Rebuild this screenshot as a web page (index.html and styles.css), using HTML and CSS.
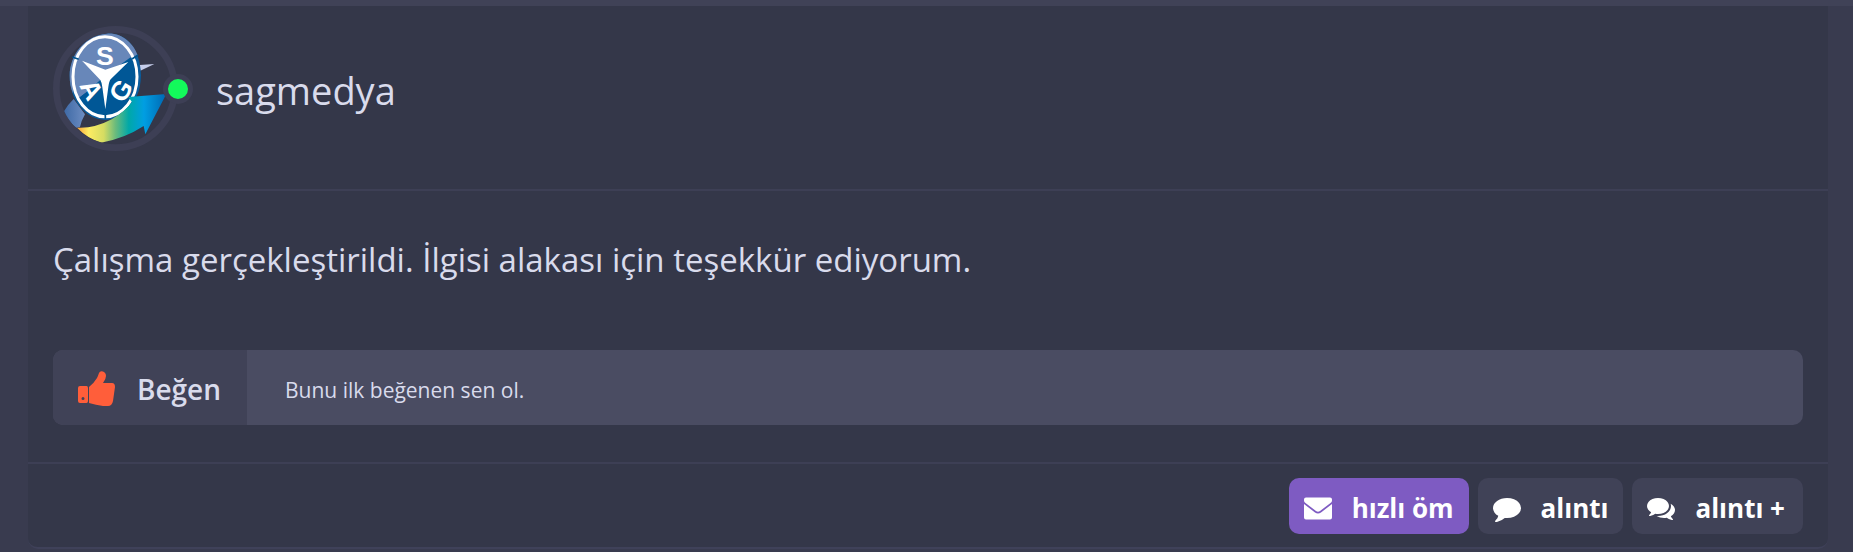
FILE: index.html
```html
<!DOCTYPE html>
<html lang="tr">
<head>
<meta charset="utf-8">
<meta name="viewport" content="width=device-width, initial-scale=1">
<title>sagmedya</title>
<link rel="stylesheet" href="styles.css">
</head>
<body>
<main class="page">
  <article class="post">
    <header class="post-header">
      <div class="avatar">
        <svg class="avatar-image" viewBox="24 18 375 375" role="img" aria-label="SAG">
          <defs>
            <linearGradient id="arrow" x1="96" y1="0" x2="364" y2="0" gradientUnits="userSpaceOnUse">
              <stop offset="0" stop-color="#f9a13a"/>
              <stop offset=".13" stop-color="#fdec62"/>
              <stop offset=".3" stop-color="#d5dc62"/>
              <stop offset=".43" stop-color="#6bbb7c"/>
              <stop offset=".58" stop-color="#00a8a8"/>
              <stop offset=".75" stop-color="#009ee2"/>
              <stop offset="1" stop-color="#0067b2"/>
            </linearGradient>
            <linearGradient id="tail" x1="58" y1="0" x2="125" y2="0" gradientUnits="userSpaceOnUse">
              <stop offset="0" stop-color="#3f6aa6"/>
              <stop offset="1" stop-color="#7190c4"/>
            </linearGradient>
            <clipPath id="inner"><circle cx="211" cy="205" r="168"/></clipPath>
            <clipPath id="disc"><ellipse cx="180" cy="170" rx="96" ry="120"/></clipPath>
          </defs>
          <circle cx="211.500" cy="205.500" r="177.500" fill="none" stroke="#3d3f55" stroke-width="20"/>
          <g clip-path="url(#inner)">
            <path d="M86 237 Q68 254 56 275 Q72 306 94 323 L105 321 Q109 302 120 283 Z" fill="url(#tail)"/>
            <path d="M284 135 L328 132 L286 152 Z" fill="#c5cdea"/>
            <path d="M186 41 C243 37 287 87 288 166 C287 218 269 245 252 261 C231 286 207 299 180 300 C121 298 73 240 74 166 C75 107 117 46 186 41 Z" fill="#0a5c9c"/>
            <path d="M186 41 C232 38 265 71 278 106 L262 112 L98 116 L84 220 C77 204 74 188 74 166 C75 107 117 46 186 41 Z" fill="#6887b9"/>
            <g clip-path="url(#disc)">
              <path d="M60 40 H300 V80 L180 168 L130 212 L92 242 H60 Z" fill="#6887b9"/>
              <path d="M180 168 L300 84 V300 H60 V265 L130 212 Z" fill="#005796"/>
            </g>
            <ellipse cx="180" cy="170" rx="96" ry="120" fill="none" stroke="#fff" stroke-width="9"/>
            <path d="M82 111 L101 118 M261 117 L279 105 M181 280 V297" stroke="#00548f" stroke-width="5"/>
            <path d="M111 122 L181 149 L250 126 L197 178 Q192 184 190 201 L181 268 L172 202 Q170 186 166 180 Z" fill="#fff"/>
            <path d="M250 231 L364 222 L301 343 L296 318 Q238 356 168 368 Q126 354 96 323 Q148 326 200 298 Q239 275 261 246 Z" fill="url(#arrow)"/>
          </g>
          <g class="logo-letters" text-anchor="middle">
            <text x="180" y="135">S</text>
            <text transform="translate(138 210) rotate(62)" x="0" y="25">A</text>
            <text transform="translate(228 212) rotate(-58)" x="0" y="27">G</text>
          </g>
        </svg>
        <span class="online-dot"></span>
      </div>
      <h1 class="author">sagmedya</h1>
    </header>
    <section class="post-body">
      <p class="message">Çalışma gerçekleştirildi. İlgisi alakası için teşekkür ediyorum.</p>
      <div class="likes">
        <button class="like-button" type="button">
          <svg class="thumb" viewBox="0 0 37 35" aria-hidden="true">
            <path fill-rule="evenodd" d="M2 15H8.500Q10 15 10 17V30Q10 32 8.500 32H2Q0 32 0 30V17Q0 15 2 15ZM5 26A1.500 1.500 0 1 0 5 29A1.500 1.500 0 1 0 5 26Z"/>
            <path d="M11 16Q16 12 19 7Q20 5 21 2Q22-.5 25 .5Q28 1.500 28 5Q28 8 25 12H34Q37 12 37 16L35 30Q34 35 30 35H25Q18 34 11 32Z"/>
          </svg>
          <span>Beğen</span>
        </button>
        <p class="like-text">Bunu ilk beğenen sen ol.</p>
      </div>
    </section>
    <footer class="post-footer">
      <button class="action primary" type="button">
        <svg class="action-icon" viewBox="0 0 28 28" aria-hidden="true"><path d="M2 3.500H26Q28 3.500 28 5.500V6.500Q28 8 26.500 9L16 17Q14 18.500 12 17L1.500 9Q0 8 0 6.500V5.500Q0 3.500 2 3.500ZM0 10L11 18.500Q14 20.500 17 18.500L28 10V23.500Q28 25.500 26 25.500H2Q0 25.500 0 23.500Z"/></svg>
        <span>hızlı öm</span>
      </button>
      <button class="action" type="button">
        <svg class="action-icon" viewBox="0 0 1792 1792" aria-hidden="true"><path d="M1792 896q0 174-120 321.500t-326 233-450 85.500q-70 0-145-8-198 175-460 242-49 14-114 22-17 2-30.500-9t-17.500-29v-1q-3-4-.5-12t2-10 4.500-9.500l6-9 7-8.500 8-9q7-8 31-34.500t34.500-38 31-39.500 32.500-51 27-59 26-76q-157-89-247.500-220T0 896q0-130 71-248.500T262 443t286-136.500T896 256q244 0 450 85.500t326 233T1792 896z"/></svg>
        <span>alıntı</span>
      </button>
      <button class="action" type="button">
        <svg class="action-icon" viewBox="0 0 1792 1792" aria-hidden="true"><path d="M1408 768q0 139-94 257t-256.500 186.500T704 1280q-86 0-176-16-124 88-278 128-36 9-86 16h-3q-11 0-20.500-8t-11.500-21q-1-3-1-6.500t.5-6.500 2-6l2.500-5 3.500-5.500 4-5 4.500-5 4-4.500q5-6 23-25t26-29.500 22.500-29 25-38.500 20.500-44Q142 1097 71 989T0 768q0-139 94-257t256.500-186.500T704 256t353.500 68.500T1314 511t94 257zm384 256q0 120-71 224.500T1526 1425q10 24 20.500 44t25 38.500 22.500 29 26 29.500 23 25q1 1 4 4.500t4.500 5 4 5 3.500 5.500l2.500 5 2 6 .5 6.500-1 6.500q-3 14-13 22t-22 7q-50-7-86-16-154-40-278-128-90 16-176 16-271 0-472-132 58 4 88 4 161 0 309-45t264-129q125-92 192-212t67-254q0-77-23-152 129 71 204 178t75 230z"/></svg>
        <span>alıntı +</span>
      </button>
    </footer>
  </article>
</main>
</body>
</html>
```
FILE: styles.css
```css
* { box-sizing: border-box; }
body {
  margin: 0;
  background: #393b4f;
  color: #d9dbec;
  font-family: "Segoe UI", "Open Sans", "Noto Sans", sans-serif;
}
.page {
  border-top: 6px solid #404257;
  padding: 0 25px 3px 28px;
}
.post {
  background: #343749;
  border-bottom: 2px solid #3f4159;
  border-radius: 0 0 10px 10px;
}
.post-header {
  display: flex;
  align-items: flex-start;
  gap: 38px;
  padding: 20px 25px 38px;
  border-bottom: 2px solid #3d3f55;
}
.avatar { position: relative; width: 125px; height: 125px; }
.avatar-image { display: block; width: 100%; height: 100%; }
.logo-letters { fill: #fff; font: bold 80px "Liberation Sans", sans-serif; }
.online-dot {
  position: absolute;
  top: 48px;
  right: -15px;
  width: 30px;
  height: 30px;
  border: 5px solid #3d3f55;
  border-radius: 50%;
  background: #13f95b;
}
.author { margin: 36px 0 0; font-size: 38px; line-height: 56px; font-weight: 400; }
.post-body { padding: 44px 25px 37px; border-bottom: 2px solid #3d3f55; }
.message { margin: 0 0 65px; font-size: 33px; line-height: 50px; }
.likes {
  display: flex;
  overflow: hidden;
  min-height: 75px;
  border-radius: 10px;
  background: #4a4c62;
}
button { border: 0; font-family: inherit; cursor: pointer; }
.like-button {
  display: flex;
  align-items: center;
  gap: 22px;
  padding: 2px 26px 0 25px;
  background: #404257;
  color: #d9dbec;
  font-size: 28px;
  line-height: 40px;
  font-weight: 600;
}
.thumb { width: 37px; height: 35px; fill: #ff5e3a; }
.like-text { margin: 21px 38px 0; font-size: 21px; line-height: 38px; }
.post-footer {
  display: flex;
  justify-content: flex-end;
  gap: 9px;
  padding: 14px 25px 13px;
}
.action {
  display: flex;
  align-items: center;
  gap: 20px;
  min-height: 56px;
  padding: 4px 15px 0;
  border-radius: 10px;
  background: #404257;
  color: #fff;
  font-size: 26px;
  line-height: 40px;
  font-weight: 700;
}
.action:last-child { padding-right: 18px; }
.primary { background: #7e5bc2; }
.action-icon { width: 28px; height: 28px; fill: currentColor; }
```
